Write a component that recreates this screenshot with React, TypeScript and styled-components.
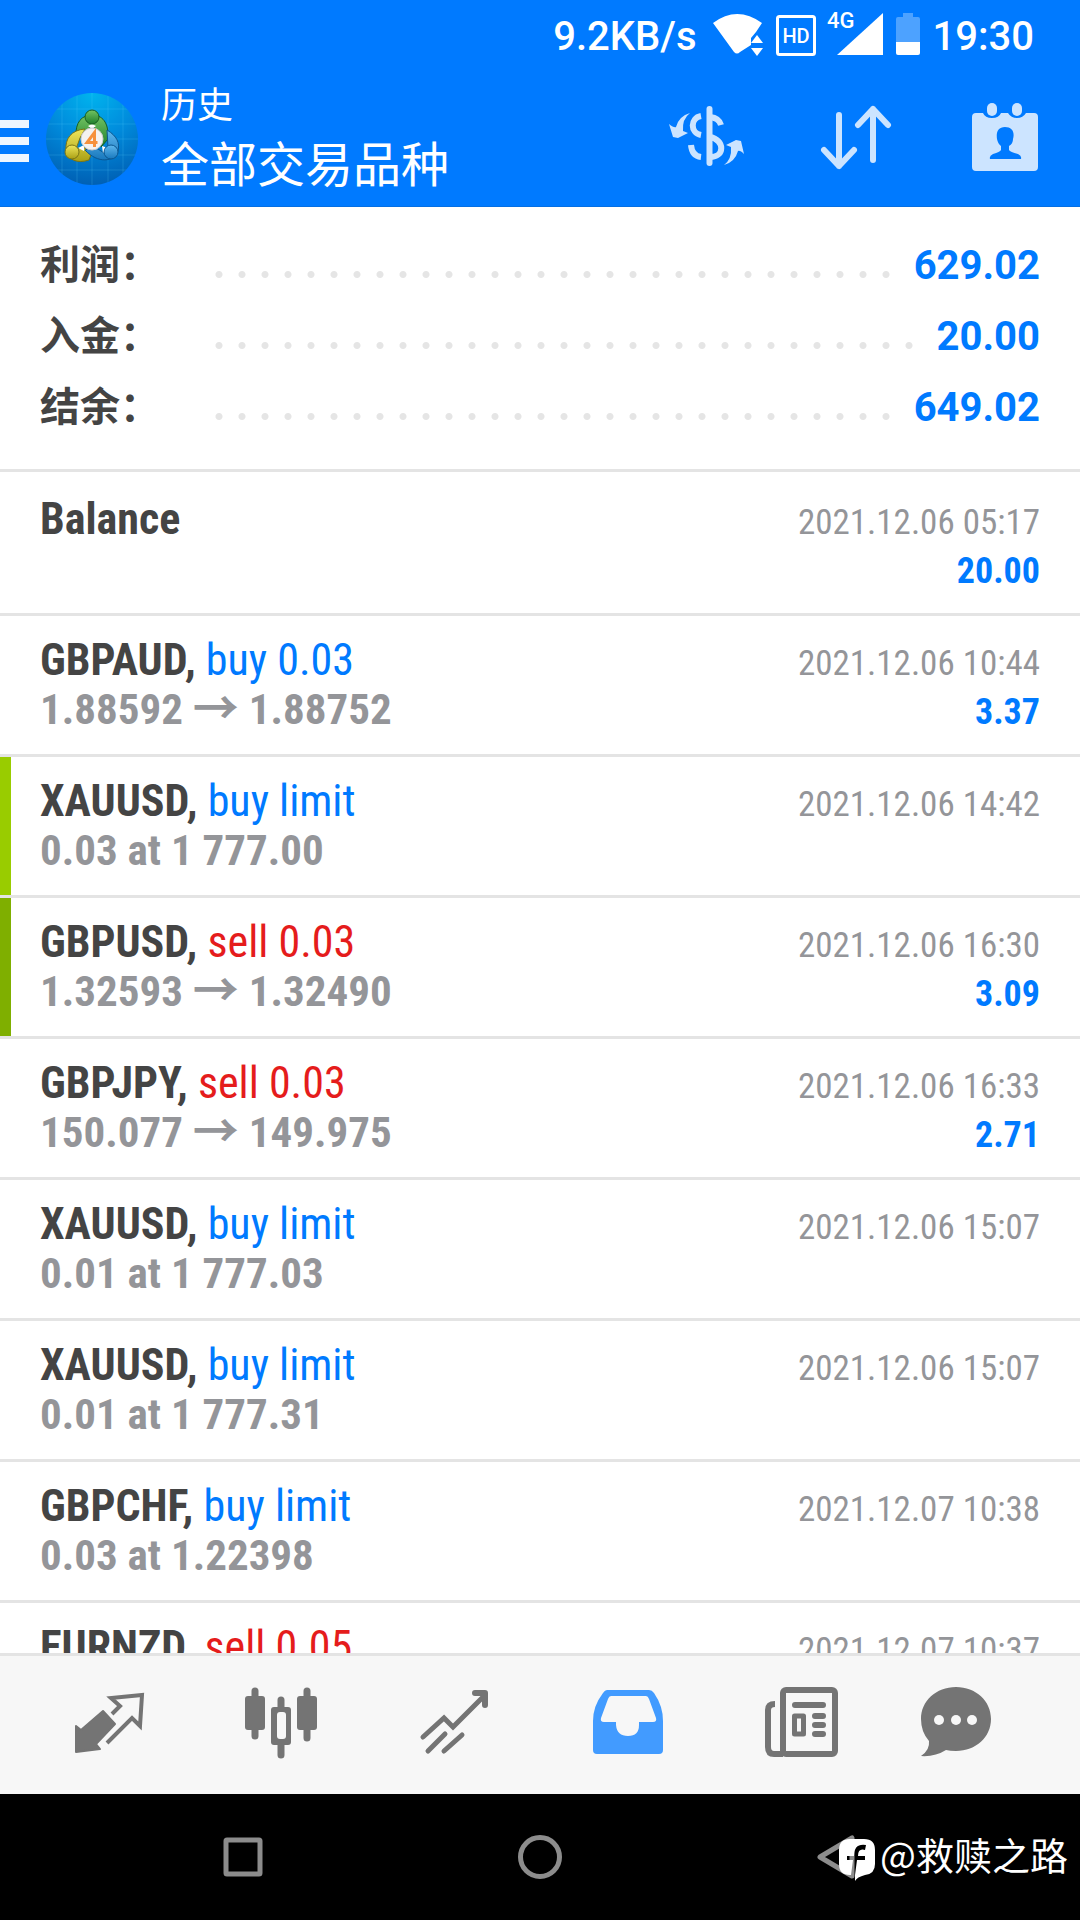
import React from 'react';
import styled, { createGlobalStyle } from 'styled-components';

const condensed = '"Roboto Condensed", Roboto, "Noto Sans CJK SC", sans-serif';
const cjk = 'Roboto, "Noto Sans CJK SC", sans-serif';

const GlobalStyle = createGlobalStyle`
  *, *::before, *::after { box-sizing: border-box; }
  body { margin: 0; background: #fff; font-family: ${cjk}; }
  button { border: 0; padding: 0; margin: 0; background: none; color: inherit; font: inherit; cursor: pointer; }
  h1, p, dl, dd, dt, ul { margin: 0; padding: 0; font-weight: inherit; }
  ul { list-style: none; }
  svg { display: block; }
`;

const Screen = styled.div`
  display: flex;
  flex-direction: column;
  height: 100vh;
  overflow: hidden;
`;

const StatusBar = styled.div`
  display: flex;
  align-items: center;
  justify-content: flex-end;
  height: 74px;
  padding-right: 46px;
  background: #007aff;
  color: #fff;
  font-size: 40px;
  line-height: 72px;
  font-weight: 500;
`;

const StatusIcons = styled.svg`
  width: 208px;
  height: 72px;
  margin: 0 12px 0 16px;
`;

const Header = styled.header`
  display: flex;
  align-items: center;
  height: 133px;
  padding: 0 42px 3px 0;
  background: #007aff;
  border-bottom: 1px solid #056fe3;
  color: #fff;
`;

const MenuButton = styled.button`
  width: 29px;
  height: 42px;
  margin: 0 17px 0 0;
`;

const Titles = styled.div`
  display: flex;
  flex-direction: column;
  gap: 6px;
  flex: 1;
  padding-left: 23px;
`;

const Section = styled.p`
  font-size: 36px;
  line-height: 48px;
`;

const Filter = styled.h1`
  font-size: 48px;
  line-height: 60px;
`;

const Actions = styled.div`
  display: flex;
  gap: 76px;
`;

const Summary = styled.dl`
  padding: 23px 40px 26px;
  border-bottom: 3px solid #e4e4e4;
`;

const SummaryRow = styled.div`
  display: flex;
  align-items: center;
  height: 71px;
  font-size: 40px;
  line-height: 71px;
  font-weight: 700;
`;

const SummaryLabel = styled.dt`
  width: 168px;
  color: #444;
`;

const Leader = styled.span`
  flex: 1;
  height: 7px;
  margin: 18px 16px 0 7px;
  background: radial-gradient(circle at 4px 50%, #e5e5e5 3px, transparent 4px) 0 0 / 23px 7px repeat-x;
`;

const SummaryValue = styled.dd`
  color: #007aff;
`;

const Deals = styled.ul`
  flex: 1;
  min-height: 0;
  overflow: hidden;
  padding-top: 3px;
  font-family: ${condensed};
`;

const Deal = styled.li<{ $mark?: string }>`
  display: flex;
  justify-content: space-between;
  height: 141px;
  padding: 20px 40px 0;
  border-bottom: 3px solid #e4e4e4;
  box-shadow: ${p => (p.$mark ? `inset 11px 0 ${p.$mark}` : 'none')};
  line-height: 49px;
  white-space: nowrap;
`;

const DealTitle = styled.p`
  font-size: 44px;
  font-weight: 700;
  color: #444;
`;

const Side = styled.span<{ $sell?: boolean }>`
  font-weight: 400;
  color: ${p => (p.$sell ? '#e51c1c' : '#007aff')};
`;

const DealDetail = styled.p`
  font-size: 43px;
  font-weight: 700;
  color: #949599;
`;

const Arrow = styled.span`
  font-size: 46px;
  line-height: 0;
`;

const DealMeta = styled.div`
  padding-top: 3px;
  text-align: right;
`;

const DealTime = styled.p`
  font-size: 35px;
  color: #949599;
`;

const Profit = styled.p`
  font-size: 36px;
  font-weight: 700;
  color: #007aff;
`;

const Tabs = styled.nav`
  display: grid;
  grid-template-columns: repeat(6, 1fr);
  height: 141px;
  padding: 0 20px;
  background: #f7f7f7;
  border-top: 3px solid #e4e4e4;
`;

const Tab = styled.button<{ $active?: boolean }>`
  display: flex;
  align-items: center;
  justify-content: center;
  color: ${p => (p.$active ? '#429bff' : '#747474')};
`;

const SystemBar = styled.div`
  position: relative;
  display: grid;
  grid-template-columns: repeat(3, 1fr);
  height: 126px;
  padding: 0 95px;
  background: #000;
  color: #8c8c8c;
`;

const SystemButton = styled.button`
  display: flex;
  align-items: center;
  justify-content: center;
`;

const Watermark = styled.div`
  position: absolute;
  right: 12px;
  top: 30px;
  display: flex;
  align-items: flex-end;
  gap: 4px;
  color: #fff;
  font: 400 38px/60px "Noto Sans CJK SC", sans-serif;
`;

const summary = [
  ['利润：', '629.02'],
  ['入金：', '20.00'],
  ['结余：', '649.02'],
];

type DealData = { symbol: string; side?: string; sell?: boolean; detail?: string; closed?: string; time: string; profit?: string; mark?: string };

const deals: DealData[] = [
  { symbol: 'Balance', time: '2021.12.06 05:17', profit: '20.00' },
  { symbol: 'GBPAUD,', side: 'buy 0.03', detail: '1.88592', closed: '1.88752', time: '2021.12.06 10:44', profit: '3.37' },
  { symbol: 'XAUUSD,', side: 'buy limit', detail: '0.03 at 1 777.00', time: '2021.12.06 14:42', mark: '#99cc00' },
  { symbol: 'GBPUSD,', side: 'sell 0.03', sell: true, detail: '1.32593', closed: '1.32490', time: '2021.12.06 16:30', profit: '3.09', mark: '#7faf00' },
  { symbol: 'GBPJPY,', side: 'sell 0.03', sell: true, detail: '150.077', closed: '149.975', time: '2021.12.06 16:33', profit: '2.71' },
  { symbol: 'XAUUSD,', side: 'buy limit', detail: '0.01 at 1 777.03', time: '2021.12.06 15:07' },
  { symbol: 'XAUUSD,', side: 'buy limit', detail: '0.01 at 1 777.31', time: '2021.12.06 15:07' },
  { symbol: 'GBPCHF,', side: 'buy limit', detail: '0.03 at 1.22398', time: '2021.12.07 10:38' },
  { symbol: 'EURNZD,', side: 'sell 0.05', sell: true, time: '2021.12.07 10:37' },
];

const Logo = () => (
  <svg width="92" height="92" viewBox="0 0 92 92" aria-hidden="true">
    <defs>
      <radialGradient id="sky" cx=".5" cy="0" r="1">
        <stop offset="0" stopColor="#00b4ee" />
        <stop offset=".5" stopColor="#008bdc" />
        <stop offset="1" stopColor="#0060b4" />
      </radialGradient>
      <linearGradient id="green" x1="0" y1="0" x2="0" y2="1">
        <stop offset="0" stopColor="#74c463" />
        <stop offset="1" stopColor="#1f7f2a" />
      </linearGradient>
      <linearGradient id="yellow" x1="0" y1="0" x2="0" y2="1">
        <stop offset="0" stopColor="#efe65c" />
        <stop offset="1" stopColor="#aaa014" />
      </linearGradient>
      <linearGradient id="blue" x1="0" y1="0" x2="0" y2="1">
        <stop offset="0" stopColor="#5fb8ee" />
        <stop offset="1" stopColor="#1878bd" />
      </linearGradient>
      <clipPath id="disc"><circle cx="46" cy="46" r="46" /></clipPath>
    </defs>
    <circle cx="46" cy="46" r="46" fill="url(#sky)" />
    <path clipPath="url(#disc)" d="M0 16H92M0 31H92M0 46H92M0 62H92M0 77H92M16 0V92M31 0V92M46 0V92M62 0V92M77 0V92" stroke="#5fd0ff" strokeOpacity=".2" />
    <path d="M30 44C29 29 36 22 46 22S63 29 62 46L55 54 52 38 46 33 40 38 37 44Z" fill="url(#green)" stroke="#185f22" />
    <path d="M39 36C25 37 19 46 20 57C22 67 31 71 43 67L46 59 37 54 30 56 34 45Z" fill="url(#yellow)" stroke="#7a7414" />
    <path d="M61 37C71 43 74 50 72 58C68 69 52 71 39 57L49 54 58 60 62 55Z" fill="url(#blue)" stroke="#0b5690" />
    <path d="M32 55L38 52V58ZM56 53L62 55 57 60ZM42 33L46 31 50 33 46 36Z" fill="#fff" />
    <circle cx="46" cy="24" r="7" fill="url(#green)" stroke="#185f22" />
    <circle cx="26" cy="59" r="7" fill="url(#yellow)" stroke="#7a7414" />
    <circle cx="65" cy="59" r="7" fill="url(#blue)" stroke="#0b5690" />
    <circle cx="46" cy="46" r="11" fill="#f4f2f0" stroke="#c9c9c9" />
    <path d="M48.500 54V39.500L41 49.500H51.500" fill="none" stroke="#f6913c" strokeWidth="3" />
  </svg>
);

const tabs = [
  {
    name: '行情',
    icon: (
      <g>
        <path d="M56 34L68 47 49 67 53 72 29 75V49L34 53Z" fill="currentColor" stroke="currentColor" strokeWidth="2" strokeLinejoin="round" />
        <path d="M65 37L73 29 64 21 95 18 93 49 85 41 60 66" fill="none" stroke="currentColor" strokeWidth="4" />
      </g>
    ),
  },
  {
    name: '图表',
    icon: (
      <g fill="currentColor">
        <path d="M35 14V59M61 23V78M87 14V61" stroke="currentColor" strokeWidth="7" strokeLinecap="round" />
        <rect x="25" y="19" width="20" height="34" rx="3" />
        <rect x="77" y="19" width="20" height="34" rx="3" />
        <rect x="51" y="30" width="20" height="38" rx="3" />
        <rect x="57" y="35" width="9" height="27" rx="3" fill="#f7f7f7" />
      </g>
    ),
  },
  {
    name: '交易',
    icon: (
      <g fill="none" stroke="currentColor" strokeWidth="5">
        <path d="M30 60L51 41 60 50 91 19" strokeLinecap="round" />
        <path d="M82 16H92V28" strokeWidth="6" strokeLinecap="round" strokeLinejoin="round" />
        <path d="M35 74L52 57M51 74L69 58" strokeLinecap="round" />
      </g>
    ),
  },
  {
    name: '历史',
    active: true,
    icon: (
      <path fillRule="evenodd" fill="currentColor" d="M40 13H82Q85 13 87 16Q96 29 96 44V73Q96 77 92 77H30Q26 77 26 73V44Q26 29 36 16Q38 13 40 13ZM44 19Q42 19 41 22L34 41Q33 45 37 45H49V48Q50 59 61 59T72 48V45H86Q90 45 89 41L82 22Q81 19 79 19Z" />
    ),
  },
  {
    name: '新闻',
    icon: (
      <g fill="none" stroke="currentColor">
        <rect x="43" y="13" width="52" height="64" rx="3" strokeWidth="6" />
        <path d="M35 27Q28 27 28 33V70Q28 77 34 77H43" strokeWidth="6" />
        <path d="M55 28H83M75 39H83M75 48H83M75 57H83" strokeWidth="6" strokeLinecap="round" />
        <rect x="54.500" y="39" width="9" height="18" strokeWidth="5" strokeLinejoin="round" />
      </g>
    ),
  },
  {
    name: '消息',
    icon: (
      <g>
        <path d="M43 10C63 10 78 24 78 42S63 74 43 74Q37 74 33 73Q22 80 8 79Q17 73 16 64Q8 55 8 42C8 24 23 10 43 10Z" fill="currentColor" />
        <g fill="#f7f7f7">
          <circle cx="26" cy="43" r="5" /><circle cx="43" cy="43" r="5" /><circle cx="59" cy="43" r="5" />
        </g>
      </g>
    ),
  },
];

export default function App() {
  return (
    <Screen>
      <GlobalStyle />
      <StatusBar>
        <span>9.2KB/s</span>
        <StatusIcons viewBox="0 0 208 72" fill="#fff" aria-hidden="true">
          <path d="M0 22Q24 4 49 22L43 31 38 37V44L27 51Q24 54 21 51Z" />
          <path d="M44 34L50 42H38ZM44 55L50 47H38Z" />
          <rect x="64.500" y="15.500" width="37" height="38" rx="2" fill="none" stroke="#fff" strokeWidth="3" />
          <text x="83" y="42" fontSize="20" textAnchor="middle">HD</text>
          <text x="114" y="27" fontSize="22">4G</text>
          <path d="M170 12V54H124Z" />
          <path d="M183 18Q183 16 185 16H190V12H200V16H205Q207 16 207 18V41H183Z" opacity=".3" />
          <path d="M183 41H207V52Q207 54 205 54H185Q183 54 183 52Z" />
        </StatusIcons>
        <span>19:30</span>
      </StatusBar>
      <Header>
        <MenuButton aria-label="菜单">
          <svg width="29" height="44" viewBox="0 0 29 44" fill="#eef6ff"><path d="M0 2H29V10H0ZM0 19H29V27H0ZM0 36H29V44H0Z" /></svg>
        </MenuButton>
        <Logo />
        <Titles>
          <Section>历史</Section>
          <Filter>全部交易品种</Filter>
        </Titles>
        <Actions>
          <button aria-label="货币">
            <svg width="76" height="76" viewBox="-1 2 76 76" fill="#cce4ff">
              <path d="M21 14Q13 20 14 32L19 34 9 39 4 38 0 25Q5 29 7 28Q10 17 21 14Z" />
              <path d="M55 66Q63 60 62 48L57 46 67 41 72 42 75 55Q71 51 69 52Q66 63 55 66Z" />
              <path d="M32 17C21 19 21 34 32 36" fill="none" stroke="#cce4ff" strokeWidth="6" />
              <path d="M22 46Q23 57 32 58M41 18Q50 19 52 26M41 38C56 41 56 58 41 58" fill="none" stroke="#cce4ff" strokeWidth="6" />
              <path d="M40.500 10V64" stroke="#cce4ff" strokeWidth="6" strokeLinecap="round" />
            </svg>
          </button>
          <button aria-label="排序">
            <svg width="76" height="76" viewBox="-1 2 76 76" fill="none" stroke="#cce4ff" strokeWidth="6" strokeLinecap="round" strokeLinejoin="round">
              <path d="M18 16V67M3 51L18 67 33 51M52 61V10M37 26L52 10 67 26" />
            </svg>
          </button>
          <button aria-label="日期">
            <svg width="66" height="76" viewBox="0 2 66 76" fill="#cce4ff">
              <path fillRule="evenodd" d="M4 14H11Q13 19 20 19T29 14H36Q39 19 45 19T54 14H62Q66 14 66 18V68Q66 72 62 72H4Q0 72 0 68V18Q0 14 4 14ZM33 28C26 28 24 33 25 40Q26 45 29 47V51Q28 53 21 55Q17 57 18 60H49Q50 57 46 55Q38 53 37 51V47Q41 45 41 40C43 33 40 28 33 28Z" />
              <rect x="15" y="4" width="10" height="13" rx="5" />
              <rect x="40" y="4" width="10" height="13" rx="5" />
            </svg>
          </button>
        </Actions>
      </Header>
      <Summary>
        {summary.map(([label, value]) => (
          <SummaryRow key={label}>
            <SummaryLabel>{label}</SummaryLabel>
            <Leader />
            <SummaryValue>{value}</SummaryValue>
          </SummaryRow>
        ))}
      </Summary>
      <Deals>
        {deals.map((d, i) => (
          <Deal key={i} $mark={d.mark}>
            <div>
              <DealTitle>{d.symbol} <Side $sell={d.sell}>{d.side}</Side></DealTitle>
              <DealDetail>
                {d.detail}
                {d.closed && <> <Arrow>→</Arrow> {d.closed}</>}
              </DealDetail>
            </div>
            <DealMeta>
              <DealTime>{d.time}</DealTime>
              <Profit>{d.profit}</Profit>
            </DealMeta>
          </Deal>
        ))}
      </Deals>
      <Tabs>
        {tabs.map(t => (
          <Tab key={t.name} $active={t.active} aria-label={t.name}>
            <svg width="120" height="96" viewBox="0 0 120 96">{t.icon}</svg>
          </Tab>
        ))}
      </Tabs>
      <SystemBar>
        <SystemButton aria-label="最近任务">
          <svg width="44" height="44" viewBox="0 0 44 44" fill="none" stroke="currentColor" strokeWidth="5"><rect x="5" y="5" width="34" height="34" rx="1" /></svg>
        </SystemButton>
        <SystemButton aria-label="主屏幕">
          <svg width="44" height="44" viewBox="0 0 44 44" fill="none" stroke="currentColor" strokeWidth="5"><circle cx="22" cy="22" r="19.500" /></svg>
        </SystemButton>
        <SystemButton aria-label="返回">
          <svg width="44" height="44" viewBox="0 0 44 44" fill="none" stroke="currentColor" strokeWidth="5" strokeLinejoin="round"><path d="M37 3V41L5 22Z" /></svg>
        </SystemButton>
        <Watermark>
          <svg width="38" height="46" viewBox="0 0 38 46" aria-hidden="true">
            <path fillRule="evenodd" fill="#fff" d="M12 1H26Q37 1 37 12V26Q37 36 27 37Q19 39 17 43V37H12Q1 37 1 26V12Q1 1 12 1ZM28 7Q16 5 16 18H9V22H15L13 37H17L19 22H27V18H20Q20 10 27 12Z" />
          </svg>
          <span>@救赎之路</span>
        </Watermark>
      </SystemBar>
    </Screen>
  );
}
